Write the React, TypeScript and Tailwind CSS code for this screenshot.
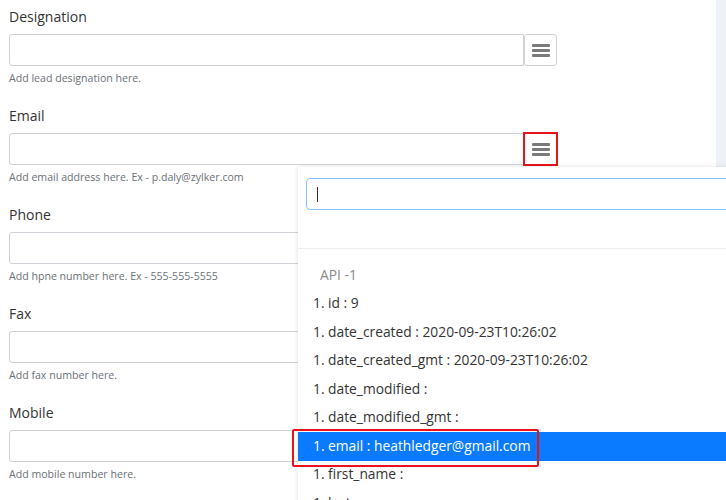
import React from "react";

const fields = [
  { label: "Designation", help: "Add lead designation here." },
  { label: "Email", help: "Add email address here. Ex - p.daly@zylker.com", active: true },
  { label: "Phone", help: "Add hpne number here. Ex - 555-555-5555" },
  { label: "Fax", help: "Add fax number here." },
  { label: "Mobile", help: "Add mobile number here." },
];

const items = [
  "1. id : 9",
  "1. date_created : 2020-09-23T10:26:02",
  "1. date_created_gmt : 2020-09-23T10:26:02",
  "1. date_modified :",
  "1. date_modified_gmt :",
  "1. email : heathledger@gmail.com",
  "1. first_name :",
  "1. last_name :",
];

function MenuLines() {
  return (
    <div className="flex flex-col gap-[2px]">
      <span className="block w-[18px] h-[3px] bg-[#7a7a7a] rounded-[1px]" />
      <span className="block w-[18px] h-[3px] bg-[#7a7a7a] rounded-[1px]" />
      <span className="block w-[18px] h-[3px] bg-[#7a7a7a] rounded-[1px]" />
    </div>
  );
}

export default function App() {
  return (
    <div
      className="relative w-[726px] h-[500px] overflow-hidden bg-white text-[#333]"
      style={{ fontFamily: "'Open Sans', 'Liberation Sans', sans-serif" }}
    >
      <div className="flex h-full">
        <div className="flex-1 pl-[9px] pt-[7px]">
          {fields.map((f) => (
            <div key={f.label} className="mb-[21px]">
              <div className="text-[14px] leading-[20px]">{f.label}</div>
              <div className="flex mt-[7px] h-[32px]">
                <div className="w-[515px] h-full border border-[#cfd3d8] rounded-l-[3px]" />
                {f.label === "Designation" && (
                  <div className="w-[33px] h-full border border-[#cfd3d8] rounded-[3px] flex items-center justify-center">
                    <MenuLines />
                  </div>
                )}
                {f.active && (
                  <div className="w-[35px] h-[34px] -mt-[1px] -ml-[1px] border-2 border-[#e8141b] flex items-center justify-center">
                    <MenuLines />
                  </div>
                )}
              </div>
              <div className="mt-[5px] text-[10.6px] leading-[14px] text-[#6b7177]">{f.help}</div>
            </div>
          ))}
        </div>
        <div className="w-[10px] h-full bg-[#eef1f5]" />
      </div>

      <div className="absolute left-[298px] top-[167px] w-[440px] h-[340px] bg-white shadow-[0_0_5px_rgba(0,0,0,0.12)]">
        <div className="h-[82px] border-b border-[#ececec] pl-[8px] pt-[11px]">
          <div className="h-[32px] border-[1.5px] border-[#86c1fb] rounded-[4px] flex items-center pl-[10px]">
            <span className="block w-[1px] h-[15px] bg-[#333]" />
          </div>
        </div>
        <div className="pt-[12px]">
          <div className="h-[28.5px] flex items-center pl-[22px] text-[13.8px] text-[#8a8a8a]">API -1</div>
          {items.map((it) => {
            const sel = it.startsWith("1. email");
            return (
              <div
                key={it}
                className={
                  "h-[28.5px] flex items-center pl-[15px] text-[13.8px] " +
                  (sel ? "bg-[#0a7bff] text-white" : "text-[#333]")
                }
              >
                {it}
              </div>
            );
          })}
        </div>
      </div>

      <div className="absolute left-[292px] top-[429px] w-[247px] h-[38px] border-2 border-[#e8141b] rounded-[2px]" />
    </div>
  );
}
